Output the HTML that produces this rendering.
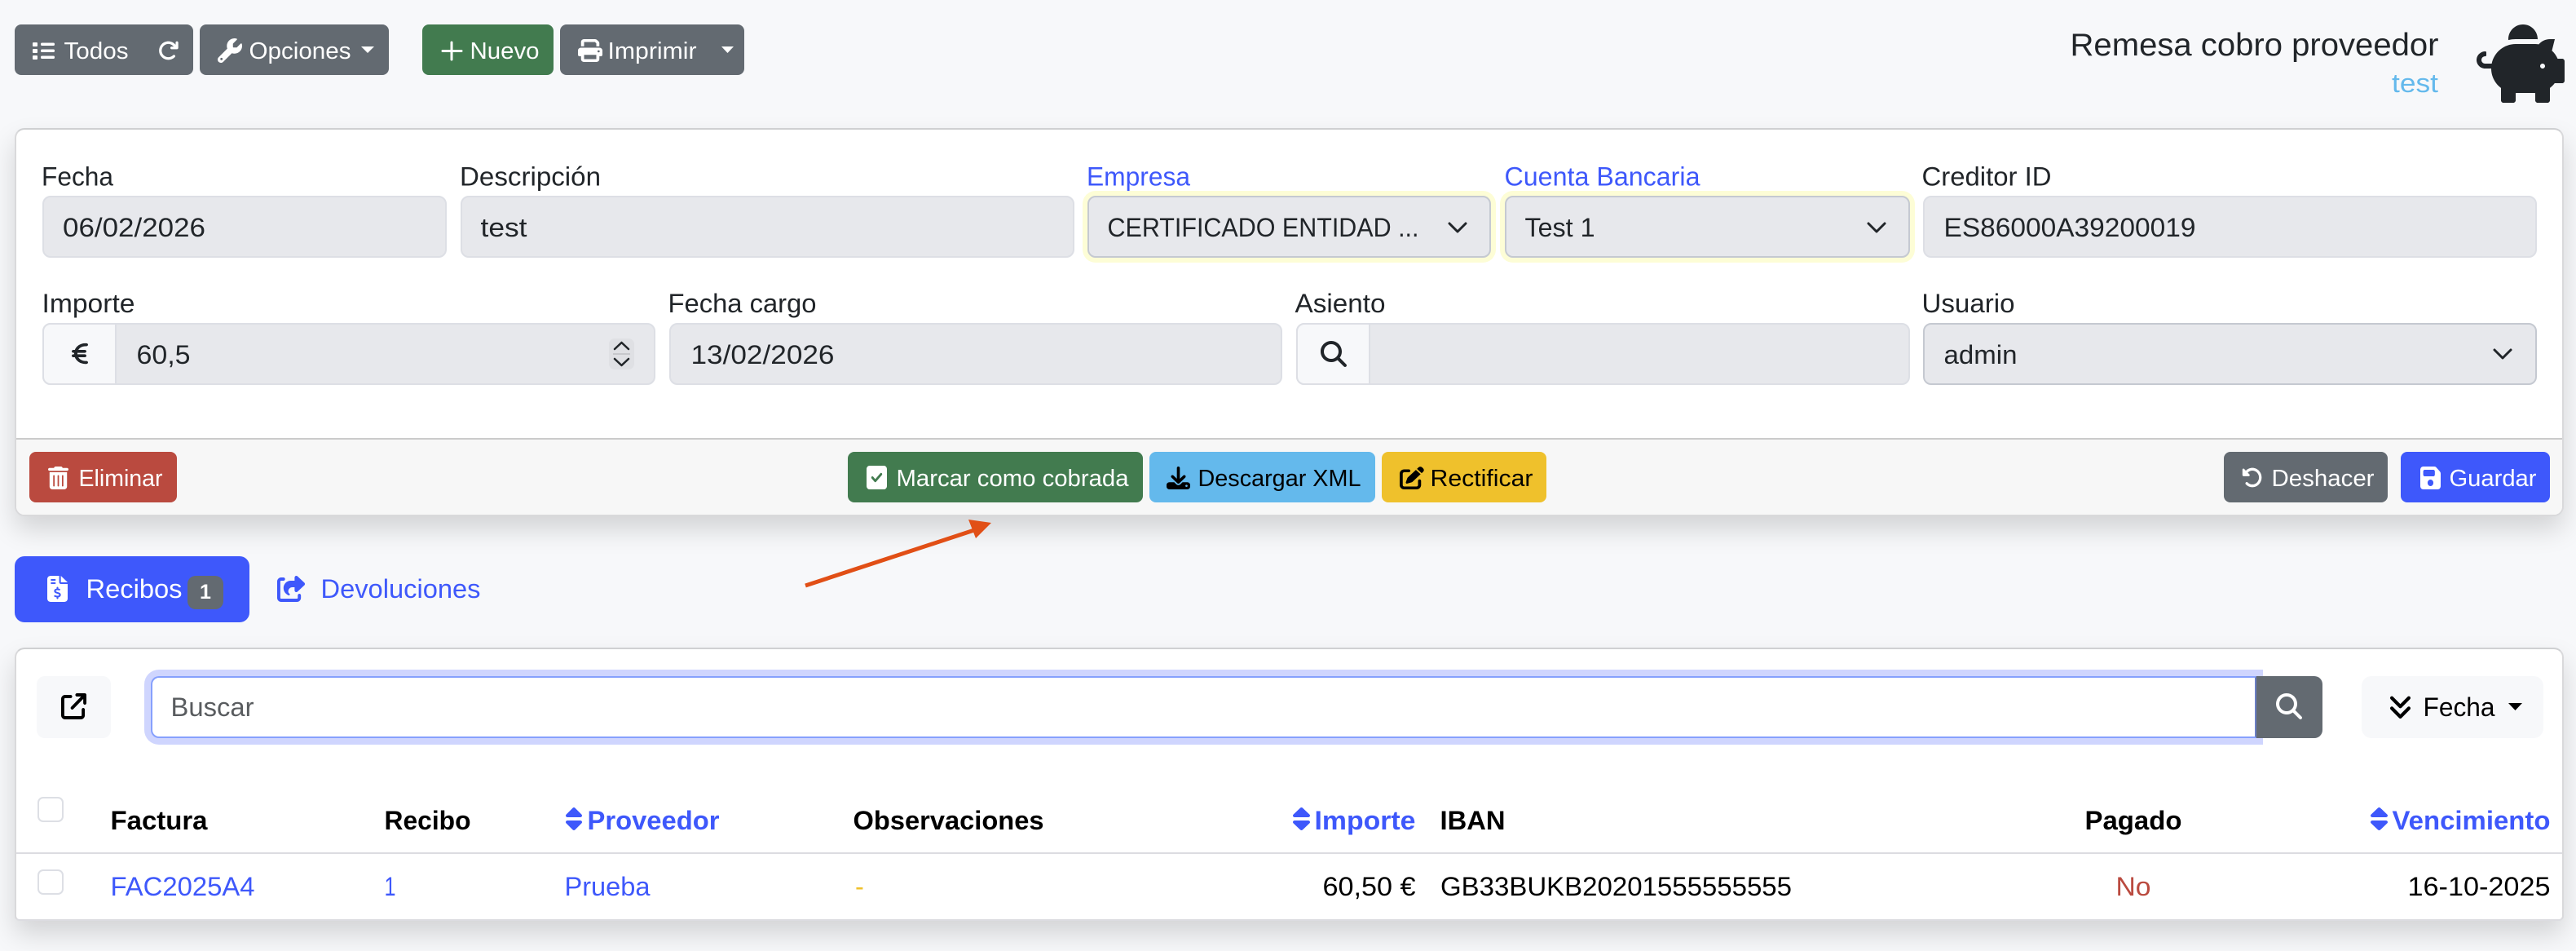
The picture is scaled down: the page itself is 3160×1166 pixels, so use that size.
<!DOCTYPE html>
<html lang="es"><head><meta charset="utf-8"><title>Remesa cobro proveedor</title>
<style>
html,body{margin:0;padding:0;width:3160px;height:1166px;overflow:hidden;background:#f7f8fa}
body{position:relative;font-family:"Liberation Sans",sans-serif}
.b{position:absolute;box-sizing:border-box}
.btn{border-radius:8px;background:#636a71}
.card{left:18px;width:3127px;background:#fff;border:2px solid #d9d9db;border-top-color:#cfd0d2;border-radius:12px;box-shadow:0 16px 32px rgba(0,0,0,.15)}
.inp{background:#e7e8ec;border:2px solid #dddfe5;border-radius:10px;height:76px}
.sel{background:#e7e8ec;border:2px solid #c5c9d1;border-radius:10px;height:76px}
.halo{box-shadow:0 0 0 6px #fdfdd6}
.add{background:#f7f8fa;border:2px solid #dddfe5;border-radius:10px 0 0 10px;height:76px}
svg.o{position:absolute;left:0;top:0}
text{font-family:"Liberation Sans",sans-serif;font-size:32.5px;fill:#212529}
.s{font-size:29px;fill:#fff}
.k{font-size:29px;fill:#000}
.u{fill:#3e58fb}
.h{font-weight:bold;fill:#000}
.d{fill:#000}
</style></head><body>
<div class="b btn" style="left:18px;top:30px;width:219px;height:62px"></div>
<div class="b btn" style="left:245px;top:30px;width:232px;height:62px"></div>
<div class="b btn" style="left:518px;top:30px;width:161px;height:62px;background:#427b4f"></div>
<div class="b btn" style="left:687px;top:30px;width:226px;height:62px"></div>

<div class="b card" style="top:157px;height:476px;overflow:hidden">
<div class="b" style="left:0;top:378px;width:100%;height:96px;background:#f7f7f7;border-top:2px solid #cbcbcb"></div>
</div>
<div class="b inp" style="left:52px;top:240px;width:496px"></div>
<div class="b inp" style="left:565px;top:240px;width:753px"></div>
<div class="b sel halo" style="left:1334px;top:240px;width:495px"></div>
<div class="b sel halo" style="left:1846px;top:240px;width:497px"></div>
<div class="b inp" style="left:2359px;top:240px;width:753px"></div>

<div class="b inp" style="left:52px;top:396px;width:752px"></div>
<div class="b add" style="left:52px;top:396px;width:91px"></div>
<div class="b" style="left:747px;top:415px;width:31px;height:38px;background:#dfe0e4;border-radius:7px"></div>
<div class="b inp" style="left:821px;top:396px;width:752px"></div>
<div class="b inp" style="left:1590px;top:396px;width:753px"></div>
<div class="b add" style="left:1590px;top:396px;width:91px"></div>
<div class="b sel" style="left:2359px;top:396px;width:753px"></div>

<div class="b btn" style="left:36px;top:554px;width:181px;height:62px;background:#ba4a3f"></div>
<div class="b btn" style="left:1040px;top:554px;width:362px;height:62px;background:#427b4f"></div>
<div class="b btn" style="left:1410px;top:554px;width:277px;height:62px;background:#64b9ec"></div>
<div class="b btn" style="left:1695px;top:554px;width:202px;height:62px;background:#efc12c"></div>
<div class="b btn" style="left:2728px;top:554px;width:201px;height:62px"></div>
<div class="b btn" style="left:2945px;top:554px;width:183px;height:62px;background:#3e58fb"></div>

<div class="b" style="left:18px;top:682px;width:288px;height:81px;background:#3e58fb;border-radius:12px"></div>
<div class="b" style="left:230px;top:706px;width:44px;height:41px;background:#636a71;border-radius:10px"></div>

<div class="b card" style="top:794px;height:335px;overflow:hidden;border-bottom-color:#dcdce1;border-radius:12px 12px 6px 6px">
<div class="b" style="left:0;top:249px;width:100%;height:2px;background:#dcdce1"></div>
</div>
<div class="b" style="left:45px;top:829px;width:91px;height:76px;background:#f7f8fa;border-radius:10px"></div>
<div class="b" style="left:185px;top:829px;width:2583px;height:76px;background:#fff;border:2px solid #86a0fd;border-right-color:#6b7fc4;border-radius:10px 0 0 10px;box-shadow:0 0 0 8px rgba(62,88,251,.25)"></div>
<div class="b" style="left:2768px;top:829px;width:81px;height:76px;background:#636a71;border-radius:0 10px 10px 0"></div>
<div class="b" style="left:2897px;top:829px;width:223px;height:76px;background:#f7f8fa;border-radius:12px"></div>
<div class="b" style="left:46px;top:977px;width:32px;height:31px;background:#fff;border:2px solid #dddfe5;border-radius:7px"></div>
<div class="b" style="left:46px;top:1066px;width:32px;height:31px;background:#fff;border:2px solid #dddfe5;border-radius:7px"></div>

<svg class="o" width="3160" height="1166" viewBox="0 0 3160 1166" xmlns="http://www.w3.org/2000/svg">
<!-- top toolbar -->
<g fill="#fff">
<rect x="40" y="52" width="6" height="5" rx="1"/><rect x="40" y="60" width="6" height="5" rx="1"/><rect x="40" y="68" width="6" height="5" rx="1"/>
<rect x="50" y="52.500" width="17" height="3.500" rx="1.500"/><rect x="50" y="60.500" width="17" height="3.500" rx="1.500"/><rect x="50" y="68.500" width="17" height="3.500" rx="1.500"/>
</g>
<text class="s" x="78.500" y="72" textLength="79" lengthAdjust="spacingAndGlyphs">Todos</text>
<svg x="193" y="49" width="27" height="26" viewBox="0 0 512 512" fill="#fff"><path d="M386.3 160H336c-17.7 0-32 14.3-32 32s14.3 32 32 32H464c17.700 0 32-14.300 32-32V64c0-17.700-14.300-32-32-32s-32 14.300-32 32v51.200L414.400 97.600c-87.500-87.500-229.300-87.500-316.800 0s-87.500 229.300 0 316.800s229.300 87.500 316.800 0c12.500-12.500 12.500-32.800 0-45.300s-32.800-12.500-45.300 0c-62.500 62.500-163.800 62.500-226.300 0s-62.500-163.800 0-226.300s163.800-62.500 226.300 0L386.300 160z"/></svg>
<svg x="267" y="47" width="30" height="30" viewBox="0 0 512 512" fill="#fff"><path d="M352 320c88.400 0 160-71.600 160-160c0-15.300-2.200-30.100-6.200-44.200c-3.100-10.800-16.400-13.200-24.300-5.300l-76.800 76.800c-3 3-7.100 4.700-11.300 4.700H336c-8.800 0-16-7.200-16-16V118.600c0-4.200 1.700-8.300 4.700-11.300l76.800-76.800c7.900-7.900 5.400-21.200-5.300-24.300C382.100 2.200 367.300 0 352 0C263.600 0 192 71.600 192 160c0 19.100 3.400 37.500 9.500 54.500L19.900 396.100C7.200 408.800 0 426.100 0 444.100C0 481.600 30.400 512 67.900 512c18 0 35.300-7.200 48-19.900L297.500 310.500c17 6.200 35.400 9.500 54.500 9.500zM80 408a24 24 0 1 1 0 48 24 24 0 1 1 0-48z"/></svg>
<text class="s" x="305.500" y="72" textLength="125" lengthAdjust="spacingAndGlyphs">Opciones</text>
<path d="M443 57h16l-8 8z" fill="#fff"/>
<path d="M554 52v21M543 62.500h23" stroke="#fff" stroke-width="3" fill="none" stroke-linecap="round"/>
<text class="s" x="576.500" y="72" textLength="85" lengthAdjust="spacingAndGlyphs">Nuevo</text>
<svg x="709" y="48" width="30" height="28" viewBox="0 0 512 512" preserveAspectRatio="none" fill="#fff"><path d="M128 0C92.700 0 64 28.700 64 64v96h64V64H354.700L384 93.300V160h64V93.300c0-17-6.700-33.300-18.700-45.300L400 18.700C388 6.700 371.700 0 354.700 0H128zM384 352v32 64H128V384 368 352H384zm64 32h32c17.700 0 32-14.300 32-32V256c0-35.300-28.700-64-64-64H64c-35.300 0-64 28.700-64 64v96c0 17.700 14.300 32 32 32H64v64c0 35.300 28.700 64 64 64H384c35.300 0 64-28.700 64-64V384zM432 248a24 24 0 1 1 0 48 24 24 0 1 1 0-48z"/></svg>
<text class="s" x="745.500" y="72" textLength="109" lengthAdjust="spacingAndGlyphs">Imprimir</text>
<path d="M885 57h15l-7.500 8z" fill="#fff"/>

<!-- title -->
<text x="2539.500" y="68" style="font-size:39px" textLength="452" lengthAdjust="spacingAndGlyphs">Remesa cobro proveedor</text>
<text x="2934" y="113" style="fill:#64b9ec" textLength="57" lengthAdjust="spacingAndGlyphs">test</text>
<svg x="3038" y="30" width="108" height="96" viewBox="0 0 576 512" fill="#212529"><path d="M560 224h-29.500c-8.800-20-21.600-37.700-37.400-52.500L512 96h-32c-29.400 0-55.400 13.500-73 34.300-7.600-1.100-15.100-2.300-23-2.300H256c-77.400 0-141.900 55-156.800 128H56c-14.800 0-26.500-13.500-23.500-28.800C34.700 215.800 45.400 208 57 208h1c3.300 0 6-2.700 6-6v-20c0-3.300-2.700-6-6-6-28.500 0-53.900 20.400-57.500 48.600C-3.900 258.800 22.700 288 56 288h40c0 52.200 25.400 98.100 64 127.300V496c0 8.800 7.200 16 16 16h64c8.800 0 16-7.200 16-16v-48h128v48c0 8.800 7.200 16 16 16h64c8.800 0 16-7.200 16-16v-80.700c11.800-8.900 22.300-19.400 31.300-31.300H560c8.800 0 16-7.200 16-16V240c0-8.800-7.200-16-16-16zm-128 64c-8.800 0-16-7.200-16-16s7.200-16 16-16 16 7.200 16 16-7.200 16-16 16zM256 96h128c5.400 0 10.700.4 15.900.8 0-.3.1-.5.1-.8 0-53-43-96-96-96s-96 43-96 96c0 2.100.5 4.100.6 6.200 15.200-3.900 31-6.200 47.400-6.200z"/></svg>

<!-- form row 1 -->
<text x="51" y="227.500" textLength="88" lengthAdjust="spacingAndGlyphs">Fecha</text>
<text x="564" y="227.500" textLength="173" lengthAdjust="spacingAndGlyphs">Descripción</text>
<text class="u" x="1333" y="227.500" textLength="127" lengthAdjust="spacingAndGlyphs">Empresa</text>
<text class="u" x="1845.500" y="227.500" textLength="240" lengthAdjust="spacingAndGlyphs">Cuenta Bancaria</text>
<text x="2357.500" y="227.500" textLength="159" lengthAdjust="spacingAndGlyphs">Creditor ID</text>
<text x="77" y="290" textLength="175" lengthAdjust="spacingAndGlyphs">06/02/2026</text>
<text x="589.500" y="290" textLength="57" lengthAdjust="spacingAndGlyphs">test</text>
<text x="1358.500" y="290" textLength="382" lengthAdjust="spacingAndGlyphs">CERTIFICADO ENTIDAD ...</text>
<text x="1870.500" y="290" textLength="86" lengthAdjust="spacingAndGlyphs">Test 1</text>
<text x="2384.500" y="290" textLength="309" lengthAdjust="spacingAndGlyphs">ES86000A39200019</text>
<g fill="none" stroke="#212529" stroke-width="3" stroke-linecap="round" stroke-linejoin="round">
<path d="M1778 274l10 10 10-10"/><path d="M2292 274l10 10 10-10"/><path d="M3060 429l10 10 10-10"/>
</g>

<!-- form row 2 -->
<text x="51.500" y="383" textLength="114" lengthAdjust="spacingAndGlyphs">Importe</text>
<text x="819.500" y="383" textLength="182" lengthAdjust="spacingAndGlyphs">Fecha cargo</text>
<text x="1588.500" y="383" textLength="111" lengthAdjust="spacingAndGlyphs">Asiento</text>
<text x="2357.500" y="383" textLength="114" lengthAdjust="spacingAndGlyphs">Usuario</text>
<svg x="88" y="419" width="20" height="29" viewBox="0 0 320 512" preserveAspectRatio="none" fill="#212529"><path d="M48.100 240c-.1 2.700-.1 5.300-.1 8v16c0 2.700 0 5.300 .1 8H32c-17.700 0-32 14.300-32 32s14.300 32 32 32H60.300C89.900 419.900 170 480 264 480h24c17.700 0 32-14.300 32-32s-14.300-32-32-32H264c-57.900 0-108.200-32.400-133.900-80H256c17.700 0 32-14.300 32-32s-14.300-32-32-32H112.200c-.1-2.600-.2-5.300-.2-8V248c0-2.700 .1-5.400 .2-8H256c17.700 0 32-14.300 32-32s-14.300-32-32-32H130.100c25.700-47.600 76-80 133.900-80h24c17.700 0 32-14.300 32-32s-14.300-32-32-32H264C170 32 89.900 92.100 60.300 176H32c-17.700 0-32 14.300-32 32s14.300 32 32 32H48.100z"/></svg>
<text x="167.500" y="446" textLength="66" lengthAdjust="spacingAndGlyphs">60,5</text>
<path d="M754 428l8.500-8 8.500 8M754 440l8.500 8 8.500-8" fill="none" stroke="#212529" stroke-width="2.500" stroke-linecap="round" stroke-linejoin="round"/>
<rect x="752" y="433" width="21" height="2" fill="#c7c8cc"/>
<text x="847.500" y="446" textLength="176" lengthAdjust="spacingAndGlyphs">13/02/2026</text>
<svg x="1620" y="418" width="32" height="32" viewBox="0 0 512 512" fill="#212529"><path d="M416 208c0 45.900-14.900 88.300-40 122.700L502.600 457.400c12.500 12.500 12.500 32.800 0 45.300s-32.800 12.500-45.300 0L330.700 376c-34.400 25.200-76.800 40-122.700 40C93.100 416 0 322.900 0 208S93.100 0 208 0S416 93.100 416 208zM208 352a144 144 0 1 0 0-288 144 144 0 1 0 0 288z"/></svg>
<text x="2384.500" y="446" textLength="90" lengthAdjust="spacingAndGlyphs">admin</text>

<!-- footer -->
<svg x="59" y="572" width="25" height="28" viewBox="0 0 448 512" preserveAspectRatio="none" fill="#fff"><path d="M135.200 17.700C140.600 6.800 151.700 0 163.800 0H284.200c12.100 0 23.200 6.800 28.600 17.700L320 32h96c17.700 0 32 14.300 32 32s-14.300 32-32 32H32C14.300 96 0 81.700 0 64S14.300 32 32 32h96l7.200-14.300zM32 128H416V448c0 35.300-28.700 64-64 64H96c-35.300 0-64-28.700-64-64V128zm96 64c-8.800 0-16 7.200-16 16V432c0 8.800 7.200 16 16 16s16-7.200 16-16V208c0-8.800-7.200-16-16-16zm96 0c-8.800 0-16 7.200-16 16V432c0 8.800 7.200 16 16 16s16-7.200 16-16V208c0-8.800-7.200-16-16-16zm96 0c-8.800 0-16 7.200-16 16V432c0 8.800 7.200 16 16 16s16-7.200 16-16V208c0-8.800-7.200-16-16-16z"/></svg>
<text class="s" x="96.500" y="596" textLength="103" lengthAdjust="spacingAndGlyphs">Eliminar</text>
<svg x="1063" y="571" width="25" height="29" viewBox="0 32 448 448" preserveAspectRatio="none" fill="#fff"><path d="M64 32C28.700 32 0 60.700 0 96V416c0 35.300 28.700 64 64 64H384c35.300 0 64-28.700 64-64V96c0-35.300-28.700-64-64-64H64zM337 209L209 337c-9.400 9.400-24.600 9.400-33.900 0l-64-64c-9.400-9.400-9.400-24.600 0-33.900s24.600-9.400 33.900 0l47 47L303 175c9.400-9.400 24.600-9.400 33.900 0s9.400 24.600 0 33.900z"/></svg>
<text class="s" x="1099.500" y="596" textLength="285" lengthAdjust="spacingAndGlyphs">Marcar como cobrada</text>
<svg x="1431" y="572" width="29" height="28" viewBox="0 0 512 512" preserveAspectRatio="none" fill="#000"><path d="M288 32c0-17.700-14.300-32-32-32s-32 14.300-32 32V274.700l-73.400-73.400c-12.500-12.500-32.800-12.500-45.300 0s-12.500 32.800 0 45.300l128 128c12.500 12.500 32.800 12.500 45.300 0l128-128c12.500-12.500 12.500-32.800 0-45.300s-32.800-12.500-45.300 0L288 274.700V32zM64 352c-35.300 0-64 28.700-64 64v32c0 35.300 28.700 64 64 64H448c35.300 0 64-28.700 64-64V416c0-35.300-28.700-64-64-64H346.500l-45.300 45.300c-25 25-65.500 25-90.500 0L165.500 352H64zm368 56a24 24 0 1 1 0 48 24 24 0 1 1 0-48z"/></svg>
<text class="k" x="1469.500" y="596" textLength="200" lengthAdjust="spacingAndGlyphs">Descargar XML</text>
<svg x="1717" y="572" width="30" height="28" viewBox="0 0 512 512" preserveAspectRatio="none" fill="#000"><path d="M471.600 21.700c-21.900-21.900-57.300-21.900-79.200 0L362.300 51.700l97.900 97.900 30.100-30.100c21.900-21.900 21.900-57.300 0-79.200L471.600 21.700zm-299.200 220c-6.100 6.100-10.800 13.600-13.500 21.900l-29.600 88.800c-2.900 8.600-.6 18.100 5.800 24.600s15.900 8.700 24.600 5.800l88.800-29.600c8.200-2.700 15.700-7.400 21.900-13.500L437.700 172.300 339.700 74.300 172.400 241.700zM96 64C43 64 0 107 0 160V416c0 53 43 96 96 96H352c53 0 96-43 96-96V320c0-17.700-14.300-32-32-32s-32 14.300-32 32v96c0 17.700-14.300 32-32 32H96c-17.700 0-32-14.300-32-32V160c0-17.700 14.300-32 32-32h96c17.700 0 32-14.300 32-32s-14.300-32-32-32H96z"/></svg>
<text class="k" x="1754.500" y="596" textLength="126" lengthAdjust="spacingAndGlyphs">Rectificar</text>
<svg x="2750" y="572" width="26" height="27" viewBox="0 0 512 512" preserveAspectRatio="none" fill="#fff"><path d="M48.500 224H40c-13.300 0-24-10.700-24-24V72c0-9.700 5.800-18.500 14.800-22.200s19.300-1.700 26.200 5.200L98.600 96.600c87.600-86.500 228.700-86.200 315.800 1c87.500 87.500 87.500 229.300 0 316.800s-229.300 87.500-316.800 0c-12.500-12.500-12.500-32.800 0-45.300s32.800-12.500 45.300 0c62.500 62.500 163.800 62.500 226.300 0s62.500-163.800 0-226.300c-62.200-62.200-162.700-62.500-225.300-1L185 183c6.900 6.900 8.900 17.200 5.200 26.200s-12.500 14.800-22.200 14.800H48.500z"/></svg>
<text class="s" x="2786.500" y="596" textLength="126" lengthAdjust="spacingAndGlyphs">Deshacer</text>
<svg x="2969" y="572" width="25" height="28" viewBox="0 32 448 448" preserveAspectRatio="none" fill="#fff"><path d="M64 32C28.700 32 0 60.700 0 96V416c0 35.300 28.700 64 64 64H384c35.300 0 64-28.700 64-64V173.300c0-17-6.700-33.300-18.700-45.300L352 50.700C340 38.700 323.700 32 306.700 32H64zm0 96c0-17.700 14.300-32 32-32H288c17.700 0 32 14.300 32 32v64c0 17.700-14.300 32-32 32H96c-17.700 0-32-14.300-32-32V128zM224 288a64 64 0 1 1 0 128 64 64 0 1 1 0-128z"/></svg>
<text class="s" x="3004.500" y="596" textLength="107" lengthAdjust="spacingAndGlyphs">Guardar</text>

<!-- arrow -->
<path d="M988 718L1195 650" stroke="#e14f16" stroke-width="5" fill="none"/>
<path d="M1216 641L1188 637L1197 660z" fill="#e14f16"/>

<!-- tabs -->
<svg x="58" y="706" width="25" height="32" viewBox="0 0 384 512" preserveAspectRatio="none" fill="#fff"><path d="M64 0C28.700 0 0 28.700 0 64V448c0 35.300 28.700 64 64 64H320c35.300 0 64-28.700 64-64V160H256c-17.700 0-32-14.300-32-32V0H64zM256 0V128H384L256 0zM64 80c0-8.800 7.200-16 16-16h64c8.800 0 16 7.200 16 16s-7.200 16-16 16H80c-8.800 0-16-7.200-16-16zm0 64c0-8.800 7.200-16 16-16h64c8.800 0 16 7.200 16 16s-7.200 16-16 16H80c-8.800 0-16-7.200-16-16zm128 72c8.800 0 16 7.200 16 16v17.300c8.500 1.200 16.700 3.100 24.100 5.100c8.500 2.300 13.600 11 11.300 19.600s-11 13.600-19.600 11.300c-11.100-3-22-5.200-32.100-5.300c-8.400-.1-17.400 1.800-23.600 5.500c-5.700 3.400-8.100 7.300-8.100 12.800c0 3.700 1.300 6.500 7.300 10.100c6.900 4.100 16.600 7.100 29.200 10.900l.5 .1 0 0 0 0c11.300 3.400 25.300 7.600 36.300 14.600c12.100 7.600 22.400 19.700 22.700 38.200c.3 19.300-9.600 33.300-22.900 41.600c-7.700 4.800-16.400 7.600-25.100 9.100V440c0 8.800-7.200 16-16 16s-16-7.200-16-16V422.200c-11.200-2.100-21.700-5.700-30.900-8.900l0 0c-2.100-.7-4.200-1.400-6.200-2.100c-8.400-2.800-12.900-11.900-10.100-20.200s11.900-12.900 20.200-10.100c2.500 .8 4.800 1.600 7.100 2.400l0 0 0 0 0 0c13.600 4.600 24.600 8.400 36.300 8.700c9.100 .3 17.900-1.700 23.700-5.300c5.100-3.200 7.900-7.300 7.800-14c-.1-4.600-1.800-7.800-7.700-11.600c-6.800-4.300-16.500-7.400-29-11.200l-1.600-.5 0 0c-11-3.300-24.300-7.300-34.800-13.700c-12-7.200-22.600-18.900-22.700-37.300c-.1-19.400 10.800-32.800 23.800-40.500c7.500-4.400 15.800-7.200 24.100-8.700V232c0-8.800 7.200-16 16-16z"/></svg>
<text x="105.500" y="733" style="fill:#fff" textLength="118" lengthAdjust="spacingAndGlyphs">Recibos</text>
<text x="252" y="734" text-anchor="middle" style="font-size:25px;fill:#fff;font-weight:bold">1</text>
<svg x="340" y="706" width="35" height="32" viewBox="0 0 576 512" preserveAspectRatio="none" fill="#3e58fb"><path d="M352 224H305.500c-45 0-81.500 36.500-81.500 81.500c0 22.300 10.300 34.300 19.200 40.500c6.800 4.700 12.800 12 12.800 20.300c0 9.800-8 17.800-17.800 17.800h-2.500c-2.400 0-4.800-.4-7.100-1.400C210.800 374.800 128 333.400 128 240c0-79.500 64.500-144 144-144h80V34.700C352 15.500 367.500 0 386.700 0c8.600 0 16.800 3.200 23.200 8.900L548.100 133.300c7.600 6.800 11.900 16.500 11.900 26.700s-4.300 19.900-11.900 26.700l-139 125.100c-5.900 5.300-13.500 8.200-21.400 8.200H384c-17.700 0-32-14.300-32-32V224zM80 96c-8.800 0-16 7.200-16 16V432c0 8.800 7.200 16 16 16H400c8.800 0 16-7.200 16-16V384c0-17.700 14.300-32 32-32s32 14.300 32 32v48c0 44.200-35.800 80-80 80H80c-44.200 0-80-35.800-80-80V112C0 67.800 35.800 32 80 32h48c17.700 0 32 14.300 32 32s-14.300 32-32 32H80z"/></svg>
<text class="u" x="393.500" y="733" textLength="196" lengthAdjust="spacingAndGlyphs">Devoluciones</text>

<!-- search row -->
<svg x="75" y="850" width="31" height="32" viewBox="0 0 512 512" preserveAspectRatio="none" fill="#000"><path d="M320 0c-17.700 0-32 14.300-32 32s14.300 32 32 32h82.700L201.400 265.400c-12.500 12.500-12.500 32.800 0 45.300s32.800 12.500 45.300 0L448 109.300V192c0 17.700 14.300 32 32 32s32-14.300 32-32V32c0-17.700-14.300-32-32-32H320zM80 32C35.800 32 0 67.800 0 112V432c0 44.200 35.800 80 80 80H400c44.200 0 80-35.800 80-80V320c0-17.700-14.300-32-32-32s-32 14.300-32 32V432c0 8.800-7.200 16-16 16H80c-8.800 0-16-7.200-16-16V112c0-8.800 7.200-16 16-16H192c17.700 0 32-14.300 32-32s-14.300-32-32-32H80z"/></svg>
<text x="209.500" y="878" style="fill:#595c5f" textLength="102" lengthAdjust="spacingAndGlyphs">Buscar</text>
<svg x="2792" y="850" width="32" height="32" viewBox="0 0 512 512" fill="#fff"><path d="M416 208c0 45.900-14.900 88.300-40 122.700L502.600 457.400c12.500 12.500 12.500 32.800 0 45.300s-32.800 12.500-45.300 0L330.700 376c-34.400 25.200-76.800 40-122.700 40C93.100 416 0 322.900 0 208S93.100 0 208 0S416 93.100 416 208zM208 352a144 144 0 1 0 0-288 144 144 0 1 0 0 288z"/></svg>
<svg x="2932" y="853" width="25" height="28" viewBox="32 54 384 426" preserveAspectRatio="none" fill="#000"><path d="M246.600 470.600c-12.500 12.500-32.800 12.500-45.300 0l-160-160c-12.500-12.500-12.500-32.800 0-45.300s32.800-12.500 45.300 0L224 402.700 361.400 265.400c12.500-12.500 32.800-12.500 45.300 0s12.500 32.800 0 45.300l-160 160zm160-352l-160 160c-12.500 12.500-32.800 12.500-45.300 0l-160-160c-12.500-12.500-12.500-32.800 0-45.300s32.800-12.500 45.300 0L224 210.700 361.400 73.400c12.500-12.500 32.800-12.500 45.300 0s12.500 32.800 0 45.300z"/></svg>
<text class="d" x="2972.500" y="878" textLength="88" lengthAdjust="spacingAndGlyphs">Fecha</text>
<path d="M3077 862h17l-8.500 9z" fill="#000"/>

<!-- table header -->
<text class="h" x="135.500" y="1017" textLength="119" lengthAdjust="spacingAndGlyphs">Factura</text>
<text class="h" x="471.500" y="1017" textLength="106" lengthAdjust="spacingAndGlyphs">Recibo</text>
<svg x="694" y="990" width="20" height="28" viewBox="0 32 320 448" preserveAspectRatio="none" fill="#3e58fb"><path d="M137.400 41.400c12.500-12.500 32.800-12.500 45.300 0l128 128c9.200 9.200 11.900 22.900 6.900 34.900s-16.600 19.800-29.600 19.800H32c-12.900 0-24.600-7.800-29.600-19.800s-2.200-25.700 6.900-34.900l128-128zm0 429.300l-128-128c-9.200-9.200-11.900-22.900-6.900-34.900s16.600-19.800 29.600-19.800H288c12.900 0 24.600 7.800 29.600 19.800s2.200 25.700-6.900 34.900l-128 128c-12.500 12.500-32.800 12.500-45.300 0z"/></svg>
<text class="h" style="fill:#3e58fb" x="720.500" y="1017" textLength="162" lengthAdjust="spacingAndGlyphs">Proveedor</text>
<text class="h" x="1046.500" y="1017" textLength="234" lengthAdjust="spacingAndGlyphs">Observaciones</text>
<svg x="1586" y="990" width="21" height="28" viewBox="0 32 320 448" preserveAspectRatio="none" fill="#3e58fb"><path d="M137.400 41.400c12.500-12.500 32.800-12.500 45.300 0l128 128c9.200 9.200 11.900 22.900 6.900 34.900s-16.600 19.800-29.600 19.800H32c-12.900 0-24.600-7.800-29.600-19.800s-2.200-25.700 6.900-34.900l128-128zm0 429.300l-128-128c-9.200-9.200-11.900-22.900-6.900-34.900s16.600-19.800 29.600-19.800H288c12.900 0 24.600 7.800 29.600 19.800s2.200 25.700-6.900 34.900l-128 128c-12.500 12.500-32.800 12.500-45.300 0z"/></svg>
<text class="h" style="fill:#3e58fb" x="1612.500" y="1017" textLength="124" lengthAdjust="spacingAndGlyphs">Importe</text>
<text class="h" x="1766.500" y="1017" textLength="80" lengthAdjust="spacingAndGlyphs">IBAN</text>
<text class="h" x="2557.500" y="1017" textLength="119" lengthAdjust="spacingAndGlyphs">Pagado</text>
<svg x="2908" y="990" width="21" height="28" viewBox="0 32 320 448" preserveAspectRatio="none" fill="#3e58fb"><path d="M137.400 41.400c12.500-12.500 32.800-12.500 45.300 0l128 128c9.200 9.200 11.900 22.900 6.900 34.900s-16.600 19.800-29.600 19.800H32c-12.900 0-24.600-7.800-29.600-19.800s-2.200-25.700 6.900-34.900l128-128zm0 429.300l-128-128c-9.200-9.200-11.900-22.900-6.900-34.900s16.600-19.800 29.600-19.800H288c12.900 0 24.600 7.800 29.600 19.800s2.200 25.700-6.900 34.900l-128 128c-12.500 12.500-32.800 12.500-45.300 0z"/></svg>
<text class="h" style="fill:#3e58fb" x="2934.500" y="1017" textLength="194" lengthAdjust="spacingAndGlyphs">Vencimiento</text>

<!-- table row -->
<text class="u" x="135.500" y="1098" textLength="177" lengthAdjust="spacingAndGlyphs">FAC2025A4</text>
<text class="u" x="471.500" y="1098" textLength="14" lengthAdjust="spacingAndGlyphs">1</text>
<text class="u" x="692.500" y="1098" textLength="105" lengthAdjust="spacingAndGlyphs">Prueba</text>
<text x="1049" y="1098" style="fill:#efc12c">-</text>
<text class="d" x="1622.500" y="1098" textLength="114" lengthAdjust="spacingAndGlyphs">60,50 €</text>
<text class="d" x="1767" y="1098" textLength="431" lengthAdjust="spacingAndGlyphs">GB33BUKB20201555555555</text>
<text x="2595.500" y="1098" style="fill:#ba4a3f" textLength="43" lengthAdjust="spacingAndGlyphs">No</text>
<text class="d" x="2953.500" y="1098" textLength="175" lengthAdjust="spacingAndGlyphs">16-10-2025</text>
</svg>
</body></html>
